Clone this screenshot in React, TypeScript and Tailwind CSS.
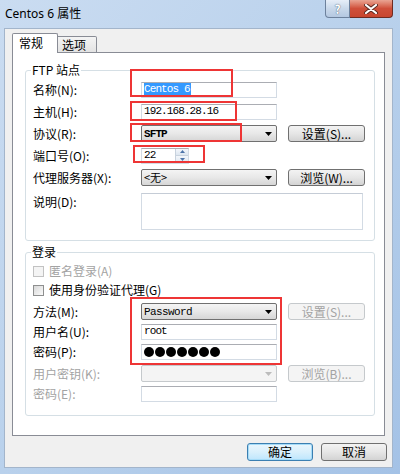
import React from "react";

const cjk = "font-['Noto_Sans_CJK_SC',sans-serif]";
const mono = "font-['Liberation_Mono','Noto_Sans_CJK_SC',monospace]";

function Label({ children, disabled, className }: { children: React.ReactNode; disabled?: boolean; className?: string }) {
  return (
    <span className={`block w-[108px] shrink-0 text-[12px] leading-[16px] ${disabled ? "text-[#a3a3a3]" : "text-black"} ${className ?? ""}`}>
      {children}
    </span>
  );
}

function Arrow({ disabled }: { disabled?: boolean }) {
  return (
    <svg width="7" height="4" viewBox="0 0 7 4" className="shrink-0">
      <polygon points="0,0 7,0 3.5,4" fill={disabled ? "#bcbcbc" : "#000"} />
    </svg>
  );
}

function Combo({ children, disabled }: { children?: React.ReactNode; disabled?: boolean }) {
  return (
    <div
      className={`w-[136px] h-[17px] rounded-[2px] border flex items-center justify-between pl-[2px] pr-[4px] ${
        disabled
          ? "border-[#c5c9cc] bg-[#f4f4f4]"
          : "border-[#707070] bg-gradient-to-b from-[#f4f4f4] via-[#e8e8e8] to-[#d6d6d6]"
      }`}
    >
      <span className={`text-[11px] leading-none text-black`}>{children}</span>
      <Arrow disabled={disabled} />
    </div>
  );
}

function Input({ children, w = "w-[136px]" }: { children?: React.ReactNode; w?: string }) {
  return (
    <div className={`${w} h-[16px] bg-white border border-[#d3dbe4] border-t-[#abadb3] flex items-center pl-[2px]`}>
      {children}
    </div>
  );
}

function Btn({ children, disabled }: { children: React.ReactNode; disabled?: boolean }) {
  return (
    <div
      className={`ml-[11px] w-[77px] h-[17px] rounded-[3px] border flex items-center justify-center text-[12px] leading-none ${
        disabled
          ? "border-[#c5c9cc] bg-[#f4f4f4] text-[#a3a3a3]"
          : "border-[#707070] bg-gradient-to-b from-[#f3f3f3] via-[#e6e6e6] to-[#d3d3d3] text-black"
      }`}
    >
      {children}
    </div>
  );
}

function Check({ children, disabled }: { children: React.ReactNode; disabled?: boolean }) {
  return (
    <div className="h-[16px] flex items-center gap-[5px]">
      <div
        className={`w-[11px] h-[11px] border ${
          disabled ? "border-[#c2c2c2] bg-[#f4f4f4]" : "border-[#8e8f8f] bg-gradient-to-br from-[#d8d8d8] to-[#fbfbfb]"
        }`}
      />
      <span className={`text-[12px] leading-[16px] ${disabled ? "text-[#a3a3a3]" : "text-black"}`}>{children}</span>
    </div>
  );
}

function Group({ title, h, className, children }: { title: string; h: string; className?: string; children: React.ReactNode }) {
  return (
    <div className={`relative w-[350px] ${h} border border-[#d5dfe5] rounded-[3px] px-[7px] ${className ?? ""}`}>
      <span className="absolute -top-[9px] left-[5px] bg-white px-[1px] text-[12px] leading-[16px] text-black">{title}</span>
      {children}
    </div>
  );
}

export default function App() {
  return (
    <div className={`relative w-[400px] h-[474px] overflow-hidden bg-gradient-to-br from-[#cadcf1] via-[#b9d1ec] to-[#a4c2e6] flex flex-col ${cjk}`}>
      {/* title bar */}
      <div className="h-[28px] flex items-start justify-between pl-[5px] pr-[7px] shrink-0">
        <div className="pt-[6px] text-[12px] leading-[16px] text-black font-['Noto_Sans','Noto_Sans_CJK_SC',sans-serif]">
          Centos 6 属性
        </div>
        <div className="flex h-[18px]">
          <div className="w-[25px] h-[18px] rounded-bl-[4px] border border-t-0 border-[#6d819c] bg-gradient-to-b from-[#e6eef8] via-[#c9d8ea] to-[#b4c8e1] flex items-center justify-center">
            <span className="text-[12px] font-bold leading-none text-white [text-shadow:0_0_1px_#5a6b80,0_0_1px_#5a6b80]">?</span>
          </div>
          <div className="w-[43px] h-[18px] rounded-br-[4px] border border-l-0 border-t-0 border-[#6e2b22] bg-gradient-to-b from-[#e9a493] via-[#cf4f3a] to-[#c8462f] flex items-center justify-center">
            <svg width="14" height="10" viewBox="0 0 14 10">
              <path d="M2 1 L12 9 M12 1 L2 9" stroke="#5b2a22" strokeWidth="4" strokeLinecap="round" />
              <path d="M2 1 L12 9 M12 1 L2 9" stroke="#ffffff" strokeWidth="2.2" strokeLinecap="round" />
            </svg>
          </div>
        </div>
      </div>

      {/* client */}
      <div className="ml-[4px] mr-[7px] h-[440px] bg-[#f0f0f0] border border-[#a3b5cb] flex flex-col">
        {/* tabs */}
        <div className="mt-[4px] ml-[7px] h-[20px] flex items-end">
          <div className="relative z-10 w-[46px] h-[20px] bg-white border border-b-0 border-[#898c95] rounded-t-[2px] pl-[6px] pt-[1px] text-[12px] leading-[16px] text-black">
            常规
          </div>
          <div className="w-[39px] h-[17px] border border-l-0 border-[#898c95] rounded-tr-[2px] bg-gradient-to-b from-[#f4f4f4] to-[#e3e3e3] pl-[4px] text-[12px] leading-[16px] text-black">
            选项
          </div>
        </div>
        {/* panel */}
        <div className="-mt-[1px] mx-[7px] h-[384px] bg-white border border-[#898c95] pl-[12px] pt-[17px]">
          <Group title="FTP 站点" h="h-[171px]">
            <div className="mt-[10px] h-[17px] flex items-center">
              <Label>名称(N):</Label>
              <Input>
                <span className={`${mono} text-[11px] tracking-[-0.9px] leading-[13px] bg-[#3399ff] text-white pr-[1px]`}>Centos 6</span>
              </Input>
            </div>
            <div className="mt-[5px] h-[17px] flex items-center">
              <Label>主机(H):</Label>
              <Input>
                <span className={`${mono} text-[11px] tracking-[-0.9px] leading-none text-black`}>192.168.28.16</span>
              </Input>
            </div>
            <div className="mt-[5px] h-[17px] flex items-center">
              <Label>协议(R):</Label>
              <Combo>
                <span className={`${mono} font-bold tracking-[-0.9px]`}>SFTP</span>
              </Combo>
              <Btn>设置(S)...</Btn>
            </div>
            <div className="mt-[5px] h-[17px] flex items-center">
              <Label>端口号(O):</Label>
              <div className="w-[48px] h-[16px] bg-white border border-[#d3dbe4] border-t-[#abadb3] flex items-center justify-between pl-[2px]">
                <span className={`${mono} text-[11px] tracking-[-0.9px] leading-none text-black`}>22</span>
                <div className="w-[13px] h-full flex flex-col border-l border-[#c8d2dd]">
                  <div className="flex-1 bg-gradient-to-b from-[#f4f7fb] to-[#dde6f0] flex items-center justify-center border-b border-[#c8d2dd]">
                    <svg width="5" height="3" viewBox="0 0 5 3"><polygon points="2.5,0 5,3 0,3" fill="#4d74a8" /></svg>
                  </div>
                  <div className="flex-1 bg-gradient-to-b from-[#f4f7fb] to-[#dde6f0] flex items-center justify-center">
                    <svg width="5" height="3" viewBox="0 0 5 3"><polygon points="0,0 5,0 2.5,3" fill="#4d74a8" /></svg>
                  </div>
                </div>
              </div>
            </div>
            <div className="mt-[5px] h-[17px] flex items-center">
              <Label>代理服务器(X):</Label>
              <Combo>&lt;无&gt;</Combo>
              <Btn>浏览(W)...</Btn>
            </div>
            <div className="mt-[7px] flex items-start">
              <Label className="mt-[1px]">说明(D):</Label>
              <div className="w-[222px] h-[37px] bg-white border border-[#d3dbe4] border-t-[#c5ccd6]" />
            </div>
          </Group>

          <Group title="登录" h="h-[164px]" className="mt-[11px]">
            <div className="mt-[10px]">
              <Check disabled>匿名登录(A)</Check>
            </div>
            <div className="mt-[3px]">
              <Check>使用身份验证代理(G)</Check>
            </div>
            <div className="mt-[5px] h-[17px] flex items-center">
              <Label>方法(M):</Label>
              <Combo>
                <span className={`${mono} tracking-[-0.6px]`}>Password</span>
              </Combo>
              <Btn disabled>设置(S)...</Btn>
            </div>
            <div className="mt-[3px] h-[17px] flex items-center">
              <Label>用户名(U):</Label>
              <Input>
                <span className={`${mono} text-[11px] tracking-[-0.9px] leading-none text-black`}>root</span>
              </Input>
            </div>
            <div className="mt-[3px] h-[17px] flex items-center">
              <Label>密码(P):</Label>
              <Input>
                <div className="flex gap-[1px]">
                  {[0, 1, 2, 3, 4, 5, 6].map((i) => (
                    <span key={i} className="w-[10px] h-[10px] rounded-full bg-black" />
                  ))}
                </div>
              </Input>
            </div>
            <div className="mt-[5px] h-[17px] flex items-center">
              <Label disabled>用户密钥(K):</Label>
              <Combo disabled />
              <Btn disabled>浏览(B)...</Btn>
            </div>
            <div className="mt-[3px] h-[17px] flex items-center">
              <Label disabled>密码(E):</Label>
              <Input />
            </div>
          </Group>
        </div>

        {/* footer */}
        <div className="mt-[7px] flex justify-end gap-[8px] pr-[5px]">
          <div className="w-[66px] h-[18px] rounded-[3px] border border-[#3c7fb1] bg-gradient-to-b from-[#eaf6fd] via-[#d9f0fc] to-[#bee6fd] shadow-[inset_0_0_0_1px_#a6dcf8] flex items-center justify-center text-[12px] leading-none text-black">
            确定
          </div>
          <div className="w-[66px] h-[18px] rounded-[3px] border border-[#707070] bg-gradient-to-b from-[#f3f3f3] via-[#e6e6e6] to-[#d3d3d3] flex items-center justify-center text-[12px] leading-none text-black">
            取消
          </div>
        </div>
      </div>

      {/* red annotation boxes */}
      <div className="absolute left-[130px] top-[69px] w-[103px] h-[28px] border-2 border-[#ee3535]" />
      <div className="absolute left-[130px] top-[101px] w-[107px] h-[20px] border-2 border-[#ee3535]" />
      <div className="absolute left-[130px] top-[123px] w-[112px] h-[19px] border-2 border-[#ee3535]" />
      <div className="absolute left-[133px] top-[145px] w-[72px] h-[18px] border-2 border-[#ee3535]" />
      <div className="absolute left-[130px] top-[297px] w-[152px] h-[68px] border-2 border-[#ee3535]" />
    </div>
  );
}
